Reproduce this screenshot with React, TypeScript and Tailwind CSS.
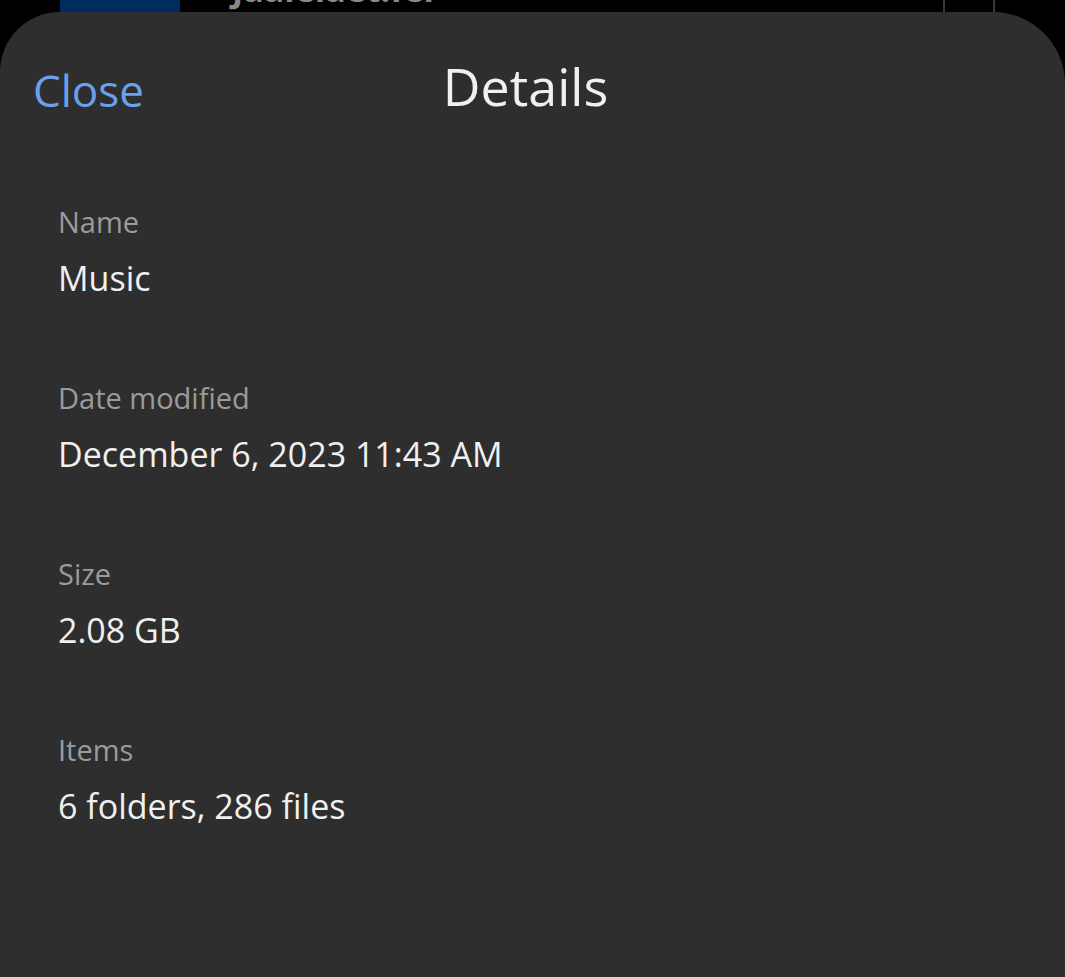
import React from 'react';

const rows = [
  { label: 'Name', value: 'Music' },
  { label: 'Date modified', value: 'December 6, 2023 11:43 AM' },
  { label: 'Size', value: '2.08 GB' },
  { label: 'Items', value: '6 folders, 286 files' },
];

export default function App() {
  return (
    <div className="w-[1065px] h-[977px] bg-black overflow-hidden flex flex-col font-['Open_Sans',sans-serif]">
      {/* list peeking behind the sheet */}
      <div className="h-[12px] shrink-0 flex items-end overflow-hidden">
        <div className="ml-[60px] w-[120px] h-full bg-[#002b5e]" />
        <div className="ml-[52px] h-full flex items-end">
          <span className="text-[#8a8a8a] text-[34px] leading-[34px] font-bold -translate-y-[6px]">Jaalelaet.fer</span>
        </div>
        <div className="ml-auto mr-[70px] h-full flex">
          <div className="w-[2px] h-full bg-[#3a3a3a]" />
          <div className="w-[48px]" />
          <div className="w-[2px] h-full bg-[#3a3a3a]" />
        </div>
      </div>

      {/* details sheet */}
      <div className="flex-1 bg-[#2e2e2e] rounded-tl-[60px] rounded-tr-[72px]">
        <div className="relative h-[150px] flex items-start pt-[50px]">
          <button className="ml-[33px] text-[#6aa0ec] text-[44px] leading-[56px]">Close</button>
          <h1 className="absolute left-0 right-0 top-[46px] text-center text-[#f0f0f0] text-[52px] leading-[56px] font-medium pr-[14px]">
            Details
          </h1>
        </div>

        <div className="flex flex-col pl-[58px] pt-[40px]">
          {rows.map((r) => (
            <div key={r.label} className="h-[176px] flex flex-col">
              <span className="text-[#9b9b9b] text-[29px] leading-[40px]">{r.label}</span>
              <span className="text-[#f0f0f0] text-[34px] leading-[48px] mt-[12px]">{r.value}</span>
            </div>
          ))}
        </div>
      </div>
    </div>
  );
}
